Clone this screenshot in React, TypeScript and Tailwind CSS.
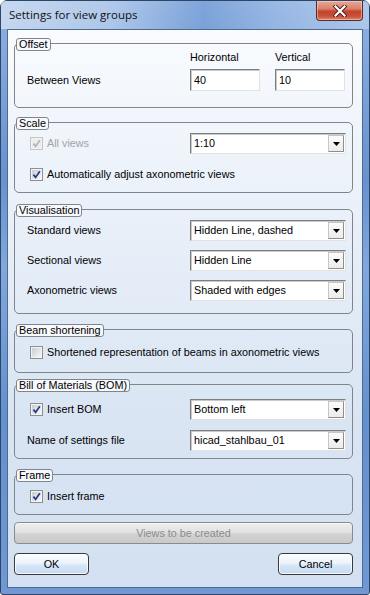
import React from 'react';

function Check({ checked, disabled }: { checked?: boolean; disabled?: boolean }) {
  return (
    <span
      className={`flex h-[13px] w-[13px] shrink-0 items-center justify-center border ${
        disabled ? 'border-[#c4c4c4] bg-[#f3f3f3]' : 'border-[#8e8f8f] bg-[#f4f4f4]'
      }`}
    >
      <span
        className={`flex h-[9px] w-[9px] items-center justify-center ${
          disabled ? 'bg-[#ececec]' : 'bg-[linear-gradient(135deg,#c9ccd1_0%,#e6e7e9_60%,#f7f7f7_100%)]'
        }`}
      >
        {checked && (
          <svg width="9" height="9" viewBox="0 0 9 9">
            <path
              d="M1.4 4.6 L3.6 7.4 L7.8 1.2"
              fill="none"
              stroke={disabled ? '#b3b3b3' : '#22398c'}
              strokeWidth="1.7"
            />
          </svg>
        )}
      </span>
    </span>
  );
}

function Select({ value }: { value: string }) {
  return (
    <div className="flex h-[21px] w-[156px] items-center border border-[#7e7e7e] border-b-[#e2e2e2] border-r-[#e2e2e2] bg-white shadow-[inset_1px_1px_0_#c9c9c9]">
      <span className="flex-1 pl-[3px] leading-[13px] text-black">{value}</span>
      <span className="mr-[1px] flex h-[17px] w-[16px] items-center justify-center border border-[#c6c6c6] border-b-[#8e8e8e] border-r-[#8e8e8e] bg-[linear-gradient(180deg,#fbfbfb_0%,#ececec_100%)]">
        <svg width="7" height="4" viewBox="0 0 7 4">
          <path d="M0 0 H7 L3.5 4 Z" fill="#000" />
        </svg>
      </span>
    </div>
  );
}

function Input({ value }: { value: string }) {
  return (
    <div className="flex h-[22px] w-[70px] items-center border border-[#7e7e7e] border-b-[#e2e2e2] border-r-[#e2e2e2] bg-white pl-[3px] shadow-[inset_1px_1px_0_#c9c9c9]">
      <span className="leading-[13px] text-black">{value}</span>
    </div>
  );
}

function Group({ title, className, children }: { title: string; className: string; children: React.ReactNode }) {
  return (
    <div className={`relative rounded-[5px] border border-[#80858c] ${className}`}>
      <span className="absolute left-[1px] top-[-6px] rounded-[3px] border border-[#80858c] bg-[#f7f9fd] px-[2px] leading-[11px] text-black">
        {title}
      </span>
      {children}
    </div>
  );
}

function Row({ children, control }: { children: React.ReactNode; control?: React.ReactNode }) {
  return (
    <div className="flex h-[21px] items-center">
      <div className="flex w-[175px] items-center">{children}</div>
      {control}
    </div>
  );
}

export default function App() {
  return (
    <div className="h-[595px] w-[370px] overflow-hidden font-['Liberation_Sans',Arial,sans-serif]">
      <div className="flex h-full w-full flex-col rounded-t-[7px] rounded-b-[3px] border border-[#2d4566] bg-[linear-gradient(180deg,#8fb2e2_0%,#6792cf_30%,#80a8dc_45%,#6490cd_70%,#7099d4_100%)]">
        {/* title bar */}
        <div className="relative flex h-[28px] items-start justify-between bg-[linear-gradient(90deg,rgba(255,255,255,0.5)_0%,rgba(255,255,255,0.3)_30%,rgba(40,90,180,0.15)_55%,rgba(255,255,255,0.1)_75%,rgba(255,255,255,0.3)_100%)]">
          <span className="pl-[8px] pt-[6px] font-['Open_Sans',sans-serif] text-[11.5px] leading-[16px] text-[#101010]">
            Settings for view groups
          </span>
          <div className="mr-[6px] flex h-[20px] w-[47px] items-center justify-center rounded-b-[4px] border border-t-0 border-[#5b2a22] bg-[linear-gradient(180deg,#e8a997_0%,#d9826c_40%,#c2442c_55%,#c8503a_80%,#e0866a_100%)] shadow-[inset_0_0_0_1px_rgba(255,220,210,0.5)]">
            <svg width="14" height="12" viewBox="0 0 14 12">
              <path d="M2.5 1.5 L11.5 10.5 M11.5 1.5 L2.5 10.5" stroke="#4a1a14" strokeWidth="4" strokeLinecap="square" />
              <path d="M2.5 1.5 L11.5 10.5 M11.5 1.5 L2.5 10.5" stroke="#ffffff" strokeWidth="2.2" strokeLinecap="square" />
            </svg>
          </div>
        </div>

        {/* client area */}
        <div className="mx-[6px] mb-[6px] flex flex-1 flex-col border border-[#4d6a93] bg-[linear-gradient(180deg,#f9fbfe_0%,#e6eef8_40%,#d9e5f3_70%,#d3e0f1_100%)] pl-[6px] pr-[9px] pt-[13px] text-[10.8px] leading-[13px] text-black">
          <Group title="Offset" className="pb-[16px] pt-[7px]">
            <div className="flex h-[13px] items-center">
              <div className="w-[175px]" />
              <span className="w-[85px]">Horizontal</span>
              <span>Vertical</span>
            </div>
            <div className="mt-[5px] flex h-[22px] items-center">
              <span className="w-[175px] pl-[12px]">Between Views</span>
              <Input value="40" />
              <div className="w-[15px]" />
              <Input value="10" />
            </div>
          </Group>

          <Group title="Scale" className="mt-[14px] pb-[7px] pt-[10px]">
            <Row control={<Select value="1:10" />}>
              <div className="flex items-center gap-[4px] pl-[15px] text-[#a3a3a3]">
                <Check checked disabled />
                <span>All views</span>
              </div>
            </Row>
            <div className="mt-[10px] flex h-[21px] items-center gap-[4px] pl-[15px]">
              <Check checked />
              <span>Automatically adjust axonometric views</span>
            </div>
          </Group>

          <Group title="Visualisation" className="mt-[16px] flex flex-col gap-[9px] pb-[12px] pt-[10px]">
            <Row control={<Select value="Hidden Line, dashed" />}>
              <span className="pl-[12px]">Standard views</span>
            </Row>
            <Row control={<Select value="Hidden Line" />}>
              <span className="pl-[12px]">Sectional views</span>
            </Row>
            <Row control={<Select value="Shaded with edges" />}>
              <span className="pl-[12px]">Axonometric views</span>
            </Row>
          </Group>

          <Group title="Beam shortening" className="mt-[15px] pb-[9px] pt-[12px]">
            <div className="flex h-[21px] items-center gap-[4px] pl-[15px]">
              <Check />
              <span>Shortened representation of beams in axonometric views</span>
            </div>
          </Group>

          <Group title="Bill of Materials (BOM)" className="mt-[11px] flex flex-col gap-[10px] pb-[7px] pt-[14px]">
            <Row control={<Select value="Bottom left" />}>
              <div className="flex items-center gap-[4px] pl-[15px]">
                <Check checked />
                <span>Insert BOM</span>
              </div>
            </Row>
            <Row control={<Select value="hicad_stahlbau_01" />}>
              <span className="pl-[12px]">Name of settings file</span>
            </Row>
          </Group>

          <Group title="Frame" className="mt-[15px] pb-[7px] pt-[11px]">
            <div className="flex h-[21px] items-center gap-[4px] pl-[15px]">
              <Check checked />
              <span>Insert frame</span>
            </div>
          </Group>

          <div className="mt-[7px] flex h-[22px] items-center justify-center rounded-[4px] border border-[#8b8b8b] bg-[linear-gradient(180deg,#eeeeee_0%,#e2e2e2_45%,#d2d2d2_55%,#c9c9c9_100%)] text-[#8d8d8d] shadow-[inset_0_1px_0_#f8f8f8]">
            Views to be created
          </div>

          <div className="mt-[9px] flex justify-between">
            <button className="flex h-[22px] w-[75px] items-center justify-center rounded-[4px] border border-[#3a3a3a] bg-[linear-gradient(180deg,#fcfdff_0%,#eef4fb_45%,#d8e7f8_55%,#c4d9f1_100%)] shadow-[inset_0_0_0_1px_rgba(255,255,255,0.8)]">
              OK
            </button>
            <button className="flex h-[22px] w-[75px] items-center justify-center rounded-[4px] border border-[#3a3a3a] bg-[linear-gradient(180deg,#fcfdff_0%,#eef4fb_45%,#d8e7f8_55%,#c4d9f1_100%)] shadow-[inset_0_0_0_1px_rgba(255,255,255,0.8)]">
              Cancel
            </button>
          </div>
        </div>
      </div>
    </div>
  );
}
